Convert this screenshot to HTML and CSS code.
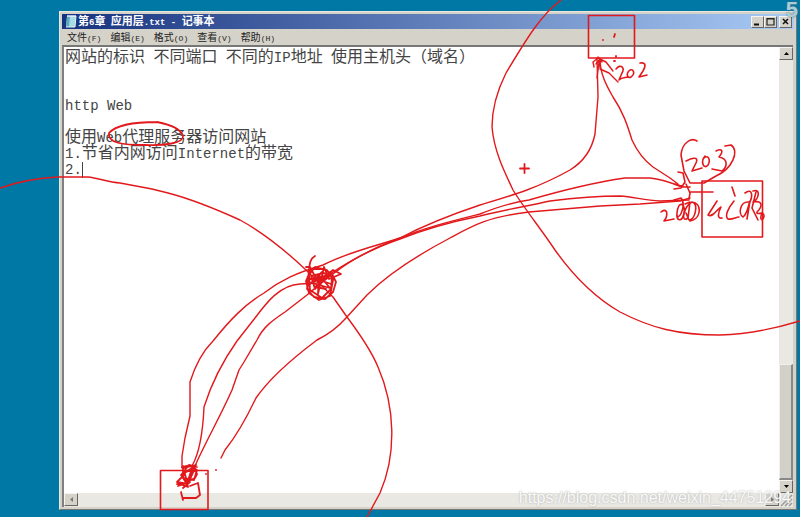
FILE: index.html
```html
<!DOCTYPE html>
<html lang="zh-CN">
<head>
<meta charset="utf-8">
<title>第6章 应用层.txt - 记事本</title>
<link rel="stylesheet" href="styles.css">
</head>
<body>
<main class="window">
  <header class="titlebar">
    <svg class="app-icon" viewBox="0 0 12 13" aria-hidden="true">
      <path d="M2 1h9l-1 11H1z" fill="#a5dce6"/>
      <path d="M2 1h3L4 12H1z" fill="#5fa9bd"/>
      <path d="M2 1h9" stroke="#eef" stroke-width="1.5"/>
      <path d="M11 1l-1 11H1" fill="none" stroke="#e3f2f2"/>
    </svg>
    <h1 class="title">第<span class="latin">6</span>章<span class="latin"> </span>应用层<span class="latin">.txt - </span>记事本</h1>
    <div class="controls">
      <button class="key" aria-label="最小化"><svg viewBox="0 0 9 9"><path d="M1 7.500h5" stroke="#111" stroke-width="2"/></svg></button>
      <button class="key" aria-label="最大化"><svg viewBox="0 0 9 9"><path d="M1 1.500h7v6.500h-7zM1 2h7" fill="none" stroke="#222" stroke-width="1.200"/></svg></button>
      <button class="key close" aria-label="关闭"><svg viewBox="0 0 9 9"><path d="M2 2l5 5M7 2L2 7" stroke="#111" stroke-width="1.500"/></svg></button>
    </div>
  </header>
  <nav class="menu">
    <button>文件<span class="latin">(F)</span></button>
    <button>编辑<span class="latin">(E)</span></button>
    <button>格式<span class="latin">(O)</span></button>
    <button>查看<span class="latin">(V)</span></button>
    <button>帮助<span class="latin">(H)</span></button>
  </nav>
  <section class="client">
    <div class="editor" role="textbox" aria-multiline="true" aria-label="文本" contenteditable="true" spellcheck="false">
      <p>网站的标识<span class="latin"> </span>不同端口<span class="latin"> </span>不同的<span class="latin">IP</span>地址<span class="latin"> </span>使用主机头（域名）</p>
      <p><br></p>
      <p><br></p>
      <p><span class="latin">http Web</span></p>
      <p><br></p>
      <p>使用<span class="latin">Web</span>代理服务器访问网站</p>
      <p><span class="latin">1.</span>节省内网访问<span class="latin">Internet</span>的带宽</p>
      <p><span class="latin caret">2.</span></p>
    </div>
    <div class="scroll vertical">
      <button class="key" aria-label="向上滚动"><svg viewBox="0 0 9 9"><path d="M2 6l2.500-3L7 6z"/></svg></button>
      <div class="thumb"></div>
      <button class="key" aria-label="向下滚动"><svg viewBox="0 0 9 9"><path d="M2 3h5L4.500 6z"/></svg></button>
    </div>
    <div class="scroll horizontal">
      <button class="key" aria-label="向左滚动"><svg viewBox="0 0 9 9"><path d="M6 2v5L3 4.500z" fill="#777"/></svg></button>
      <button class="key" aria-label="向右滚动"><svg viewBox="0 0 9 9"><path d="M3 2v5l3-2.500z" fill="#777"/></svg></button>
    </div>
    <svg class="grip" viewBox="0 0 14 14" aria-hidden="true"><path d="M2 13L13 2M6 13l7-7M10 13l3-3" stroke="#999" stroke-width="1.500"/></svg>
  </section>
</main>

<svg class="ink" viewBox="0 0 800 517" preserveAspectRatio="xMinYMin" aria-hidden="true">
  <!-- the two networks -->
  <path d="M0 188C20 181 38 178 58 177H88C98 178 108 182 120 183L152 189 168 193C195 200 218 210 240 220C264 233 287 252 306 270L333 297 347 317C359 333 371 350 378 367C395 406 397 454 380 493L367 517"/>
  <path d="M561 0C541 15 527 38 506 73C498 89 492 108 492 127C494 150 503 169 513 190C524 208 541 229 555 250C572 274 594 297 620 312C651 328 678 335 720 335C750 334 777 328 800 321"/>
  <!-- hosts -->
  <path class="box" d="M588.500 15.500h46v42.500h-46zM702 181h60.500v56H702zM160.500 470.500h47.500v39h-47.500z"/>
  <!-- term circled in the notes -->
  <path class="thick" d="M165 124L157 122C139 122 117 124 109 133C107 143 123 145 145 145C164 146 184 143 183 136C181 129 172 125 157 122"/>
  <!-- routes -->
  <path d="M182 468L182 456 185 438 190 416V382C195 366 203 351 213 341C230 320 244 305 264 293C281 280 296 273 323 265C351 251 376 246 400 238C421 227 450 215 480 205C510 196 536 189 570 170C583 162 592 149 595 134L598 97 597 58"/>
  <path d="M192 466C200 452 203 430 204 407C210 388 220 365 237 341L255 318C267 302 280 285 300 284L317 283C335 270 362 252 400 238C427 227 452 221 480 214C500 206 514 202 529 200C560 191 590 183 625 178H650C661 179 672 183 682 187"/>
  <path d="M195 466C205 443 220 417 232 390L239 370 244 362 257 340C263 327 273 320 285 312L307 295C330 276 350 256 400 239C430 227 455 221 480 216C503 210 528 206 550 201C574 198 592 196 620 196C634 197 644 200 660 201L689 200"/>
  <path d="M221 458L225 450C238 434 246 419 256 398C267 382 285 364 317 340C329 334 339 326 346 318L367 295C387 275 412 258 450 238C474 225 488 217 529 212L600 206 640 204 680 201 690 198"/>
  <path d="M600 59C600 75 608 88 613 97C623 112 627 124 632 140C637 151 645 161 653 167L670 178 678 184"/>
  <!-- gateway -->
  <path class="thick" d="M315 256C308 260 310 268 308 278L307 289 314 297 325 299 333 292 336 282 332 274 323 269 311 269 306 281 309 293 319 300 330 296 333 280 327 270 315 267 309 275 310 290 322 298 331 289 332 277 324 273 311 276 315 289 326 275 312 283 330 288 319 275 318 294 324 267 329 279 341 274 333 270 318 282 310 267 306 267M310 279L329 276 315 287 326 289M308 286L322 272M314 278L331 284"/>
  <!-- top host: arrow and label -->
  <path d="M594 67L593 62 598 58 606 62 613 71M596 64L600 59 600 68M600 69L609 73 618 82M599 62L597 78M598 57L602 62"/>
  <path class="thick" d="M603 40l0 0M614 37l1 -3M616 56v1M614 61l1 0"/>
  <path class="label" d="M616 69C621 63 625 68 622 73L619 80C622 77 625 78 628 77M630 70C625 74 628 79 631 77C636 73 633 69 630 70M640 63C646 62 646 66 643 71L639 77 647 75"/>
  <!-- right host labels -->
  <path class="label" d="M697 141C691 137 682 143 681 155L684 171 690 183H704L716 176C732 169 740 151 731 145L725 146M686 161C693 157 699 157 696 163L692 171 702 168M705 156C700 162 704 170 708 165C711 160 708 154 704 158M716 151C722 148 724 151 719 157C729 159 727 167 722 171L712 169M678 172L683 173 685 182 681 188 674 189M675 184L684 187 690 187M686 184L690 193 689 199M690 192H713"/>
  <path class="label" d="M661 212C666 208 668 212 666 218L664 221 674 219M674 200L681 198C688 206 676 225 677 213C678 200 686 203 684 213C682 223 676 221 677 213M685 204L690 202 688 218C680 224 684 206 692 202C699 204 695 220 689 220L686 213M692 202C702 203 701 217 693 220L690 221"/>
  <path class="label" d="M717 201L708 215C713 218 717 209 721 207C717 215 718 219 722 218M732 187L735 196M734 201C729 207 724 216 728 219C732 220 736 217 739 217M749 202C740 201 738 214 743 217C748 213 748 206 750 201L747 219M745 193C752 188 753 195 750 202M753 191C761 188 759 199 753 202C764 200 762 207 757 212C756 216 764 210 764 216C763 222 759 220 762 213M756 192L752 208 758 220"/>
  <!-- bottom host -->
  <path class="thick" d="M182 467L190 465 197 467M183 466V478L194 480 197 470 189 465 181 475 187 484 192 468 184 473 195 468 188 484 177 482 185 474 188 487 180 484 177 484M184 468L196 465 190 477M194 468L197 474 195 478 191 480M178 486L190 482 183 488"/>
  <path class="thick" d="M181 492L183 500M183 498L196 498 200 495 198 483 190 486M206 474l0 0M216 470l0 0"/>
  <path class="thick" d="M520 168.500h9M524.500 164v9"/>
</svg>
<div class="counter">5</div>
<div class="watermark">https://blog.csdn.net/weixin_44751294</div>
</body>
</html>
```
FILE: styles.css
```css
* { box-sizing: border-box; }

body {
  position: relative;
  display: flex;
  height: 100vh;
  margin: 0;
  padding: 11px 3px 7px 59px;
  overflow: hidden;
  background: #0078a5;
  font-family: "Noto Sans CJK SC", sans-serif;
  color: #444;
}

button {
  padding: 0;
  border: 0;
  background: none;
  font: inherit;
  color: inherit;
}

.latin {
  font-family: "Liberation Mono", monospace;
  white-space: pre;
}

.window {
  display: flex;
  flex: 1;
  flex-direction: column;
  padding: 2px;
  border: 1px solid #e8e8e0;
  border-right-color: #777;
  border-bottom-color: #777;
  background: #d5d2c9;
}

.titlebar {
  display: flex;
  align-items: center;
  height: 15px;
  padding: 0 2px 0 3px;
  background: linear-gradient(90deg, #17327f, #a9cbf5);
}

.app-icon { width: 12px; height: 13px; }

.title {
  flex: 1;
  margin: 0 0 0 1px;
  font-size: 11px;
  font-weight: 700;
  line-height: 15px;
  color: #fff;
}

.title .latin { font-size: 9px; }

.controls { display: flex; }

.key {
  display: grid;
  place-items: center;
  width: 13px;
  height: 12px;
  border: 1px solid #f5f4ef;
  border-right-color: #666;
  border-bottom-color: #666;
  background: #d5d2c9;
}

.key svg { width: 9px; height: 9px; }

.close { margin-left: 2px; }

.menu {
  display: flex;
  gap: 9px;
  height: 16px;
  padding-left: 5px;
  font-size: 10px;
  line-height: 16px;
  color: #222;
}

.menu .latin { font-size: 8px; }

.client {
  display: grid;
  flex: 1;
  grid-template-columns: 1fr 14px;
  grid-template-rows: 1fr 14px;
  min-height: 0;
  margin-right: 1px;
  border-top: 2px solid #777;
  border-left: 2px solid #808080;
  background: #e9e8e3;
}

.editor {
  padding: 0 1px;
  background: #fff;
  font-size: 16px;
  line-height: 16px;
  outline: 0;
}

.editor p { height: 16px; margin: 0; }

.editor .latin { font-size: 14px; }

.caret { border-right: 1px solid #444; }

.scroll {
  display: flex;
  justify-content: space-between;
  background: #e9e8e3;
}

.vertical { flex-direction: column; }

.vertical .key,
.horizontal .key { width: 14px; height: 13px; }

.thumb {
  height: 26%;
  margin-top: auto;
  border: 1px solid #f0efe9;
  border-right: 2px solid #888;
  border-bottom: 2px solid #888;
  background: #d2d1c9;
}

.grip { width: 14px; height: 14px; }

.ink {
  position: absolute;
  top: 0;
  left: 0;
  width: 100%;
  height: 100%;
  fill: none;
  stroke: #e2191c;
  stroke-width: 1.4;
  stroke-linecap: round;
  stroke-linejoin: round;
  pointer-events: none;
}

.box { stroke-width: 1.6; }

.label { stroke-width: 1.6; }

.thick { stroke-width: 1.8; }

.counter,
.watermark {
  position: absolute;
  font-family: "Liberation Sans", sans-serif;
  pointer-events: none;
}

.counter {
  top: 0;
  right: 2px;
  font-size: 22px;
  font-weight: 700;
  line-height: 20px;
  color: #a9cdd6;
  text-shadow: 0 0 2px #567;
}

.watermark {
  right: 9px;
  bottom: 9px;
  font-size: 16px;
  line-height: 20px;
  color: #f8f8f8;
  text-shadow: 0 0 2px #aaa;
}
```
